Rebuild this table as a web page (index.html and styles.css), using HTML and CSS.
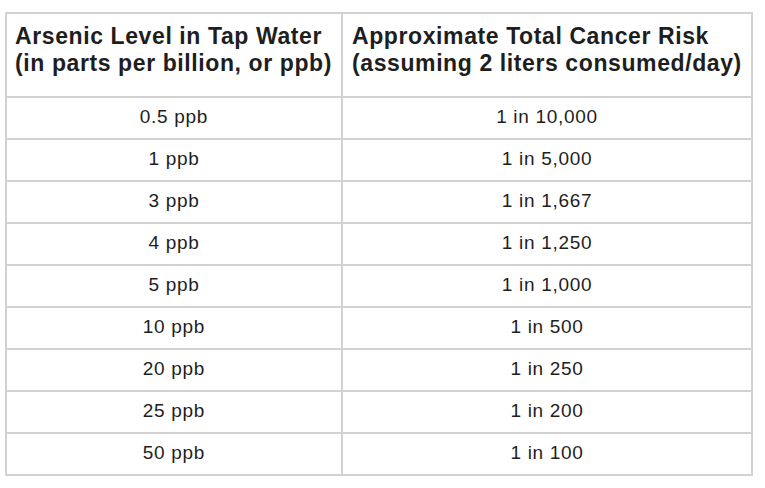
FILE: index.html
```html
<!DOCTYPE html>
<html>
<head>
<meta charset="utf-8">
<link rel="stylesheet" href="styles.css">
</head>
<body>
<table class="risk">
  <colgroup><col class="c1"><col class="c2"></colgroup>
  <thead>
    <tr>
      <th>Arsenic Level in Tap Water<br>(in parts per billion, or ppb)</th>
      <th>Approximate Total Cancer Risk<br>(assuming 2 liters consumed/day)</th>
    </tr>
  </thead>
  <tbody>
    <tr><td>0.5 ppb</td><td>1 in 10,000</td></tr>
    <tr><td>1 ppb</td><td>1 in 5,000</td></tr>
    <tr><td>3 ppb</td><td>1 in 1,667</td></tr>
    <tr><td>4 ppb</td><td>1 in 1,250</td></tr>
    <tr><td>5 ppb</td><td>1 in 1,000</td></tr>
    <tr><td>10 ppb</td><td>1 in 500</td></tr>
    <tr><td>20 ppb</td><td>1 in 250</td></tr>
    <tr><td>25 ppb</td><td>1 in 200</td></tr>
    <tr><td>50 ppb</td><td>1 in 100</td></tr>
  </tbody>
</table>
</body>
</html>
```
FILE: styles.css
```css
html, body {
  margin: 0;
  padding: 0;
  background: #ffffff;
}
body {
  padding: 12px 0 0 5px;
  font-family: "Liberation Sans", Arial, sans-serif;
  color: #1e1e1e;
}
.risk {
  border-collapse: collapse;
  table-layout: fixed;
  width: 746px;
  border: 2px solid #d2d2d2;
}
.c1 { width: 336px; }
.c2 { width: 410px; }
.risk th, .risk td {
  border: 2px solid #d2d2d2;
  padding: 0;
}
.risk th {
  height: 84px;
  box-sizing: border-box;
  text-align: left;
  vertical-align: top;
  font-weight: bold;
  font-size: 23px;
  line-height: 27px;
  letter-spacing: 0.6px;
  padding: 9px 0 0 8px;
  white-space: nowrap;
}
.risk th + th {
  padding-left: 9px;
}
.risk td {
  height: 42px;
  box-sizing: border-box;
  text-align: center;
  vertical-align: middle;
  font-size: 19px;
  letter-spacing: 0.7px;
  padding-bottom: 2px;
}
```
